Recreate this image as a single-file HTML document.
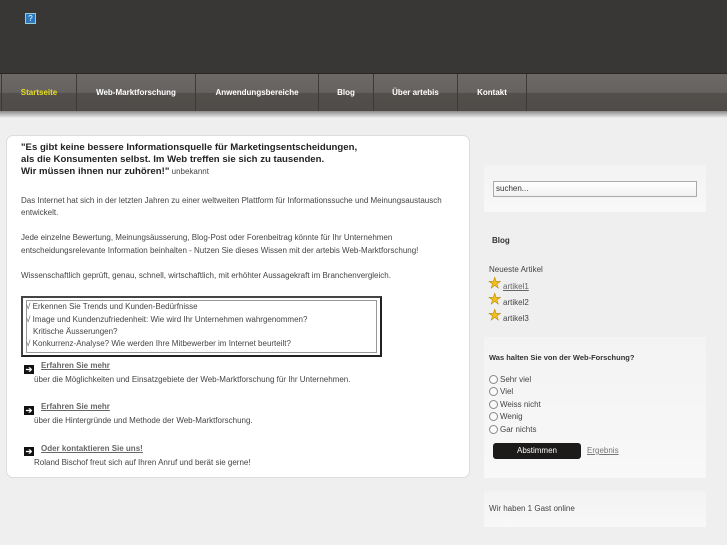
<!DOCTYPE html>
<html><head><meta charset="utf-8"><style>
*{margin:0;padding:0;box-sizing:border-box}
body{width:727px;height:545px;background:#efefef;font-family:"Liberation Sans",sans-serif;position:relative;overflow:hidden;color:#333}
.a{position:absolute;white-space:nowrap}
#hdr{position:absolute;left:0;top:0;width:727px;height:73px;background:#393735}
#nav{position:absolute;left:0;top:73px;width:727px;height:38px;background:linear-gradient(#6c6967 0,#666260 50%,#534f4c 52%,#4f4b48 100%);border-top:1px solid #2a2827}
#nav div{position:absolute;top:0;height:38px;border-left:1px solid #3c3937;color:#fff;font-size:8px;font-weight:bold;text-align:center;line-height:37px}
#sh{position:absolute;left:0;top:111px;width:727px;height:7px;background:linear-gradient(#8a8a8a,#efefef)}
#main{position:absolute;left:6px;top:135px;width:464px;height:343px;background:#fff;border:1px solid #ddd;border-radius:7px}
.q{font-size:9.6px;font-weight:bold;color:#222;left:21px}
.t{font-size:8px;color:#444}
.lk{font-size:8px;font-weight:bold;color:#666;text-decoration:underline}
.ar{position:absolute;width:10px;height:9px;background:#111;color:#fff;font-size:8px;line-height:9px;text-align:center;font-weight:bold}
.pn{position:absolute;left:484px;width:222px;background:linear-gradient(#f3f3f3,#f8f8f8)}
.rd{position:absolute;left:489px;width:9px;height:9px;border:1px solid #888;border-radius:50%;background:#fafafa}
.st{position:absolute;left:488px;font-size:15px;color:#f0c020;line-height:15px;-webkit-text-stroke:0.5px #b08000}
</style></head><body>
<div id="hdr"></div>
<div class="a" style="left:25px;top:13px;width:11px;height:11px;background:#2b78c0;border:1px solid #9cc;color:#fff;font-size:8px;line-height:9px;text-align:center">?</div>
<div id="nav">
<div style="left:1px;width:75px;color:#e8de20">Startseite</div>
<div style="left:76px;width:119px">Web-Marktforschung</div>
<div style="left:195px;width:123px">Anwendungsbereiche</div>
<div style="left:318px;width:55px">Blog</div>
<div style="left:373px;width:84px">Über artebis</div>
<div style="left:457px;width:69px">Kontakt</div>
<div style="left:526px;width:201px"></div>
</div>
<div id="sh"></div>
<div id="main"></div>
<div class="a q" style="top:142px">"Es gibt keine bessere Informationsquelle für Marketingsentscheidungen,</div>
<div class="a q" style="top:154px">als die Konsumenten selbst. Im Web treffen sie sich zu tausenden.</div>
<div class="a q" style="top:166px">Wir müssen ihnen nur zuhören!"<span style="font-size:8px;font-weight:normal;color:#444"> unbekannt</span></div>
<div class="a t" style="left:21px;top:196px">Das Internet hat sich in der letzten Jahren zu einer weltweiten Plattform für Informationssuche und Meinungsaustausch</div>
<div class="a t" style="left:21px;top:208px">entwickelt.</div>
<div class="a t" style="left:21px;top:233px">Jede einzelne Bewertung, Meinungsäusserung, Blog-Post oder Forenbeitrag könnte für Ihr Unternehmen</div>
<div class="a t" style="left:21px;top:246px">entscheidungsrelevante Information beinhalten - Nutzen Sie dieses Wissen mit der artebis Web-Marktforschung!</div>
<div class="a t" style="left:21px;top:271px">Wissenschaftlich geprüft, genau, schnell, wirtschaftlich, mit erhöhter Aussagekraft im Branchenvergleich.</div>
<div class="a" style="left:21px;top:296px;width:361px;height:61px;border:2px solid #444;border-right-color:#222;border-bottom-color:#222"><div style="position:absolute;left:3px;top:2px;right:3px;bottom:2px;border:1px solid #999"></div></div>
<div class="a t" style="left:26px;top:302px">√ Erkennen Sie Trends und Kunden-Bedürfnisse</div>
<div class="a t" style="left:26px;top:315px">√ Image und Kundenzufriedenheit: Wie wird Ihr Unternehmen wahrgenommen?</div>
<div class="a t" style="left:33px;top:327px">Kritische Äusserungen?</div>
<div class="a t" style="left:26px;top:339px">√ Konkurrenz-Analyse? Wie werden Ihre Mitbewerber im Internet beurteilt?</div>
<div class="ar" style="left:24px;top:365px">➔</div><div class="a lk" style="left:41px;top:361px">Erfahren Sie mehr</div>
<div class="a t" style="left:34px;top:375px">über die Möglichkeiten und Einsatzgebiete der Web-Marktforschung für Ihr Unternehmen.</div>
<div class="ar" style="left:24px;top:406px">➔</div><div class="a lk" style="left:41px;top:402px">Erfahren Sie mehr</div>
<div class="a t" style="left:34px;top:416px">über die Hintergründe und Methode der Web-Marktforschung.</div>
<div class="ar" style="left:24px;top:447px">➔</div><div class="a lk" style="left:41px;top:444px">Oder kontaktieren Sie uns!</div>
<div class="a t" style="left:34px;top:458px">Roland Bischof freut sich auf Ihren Anruf und berät sie gerne!</div>

<div class="pn" style="top:165px;height:47px"></div>
<div class="a" style="left:493px;top:181px;width:204px;height:16px;border:1px solid #aaa;background:linear-gradient(#fff,#f0f0f0);font-size:8px;color:#333;padding:2px 2px;line-height:10px">suchen...</div>
<div class="a" style="left:492px;top:236px;font-size:8px;font-weight:bold;color:#333">Blog</div>
<div class="a t" style="left:489px;top:265px">Neueste Artikel</div>
<div class="st" style="top:276px">★</div><div class="a t" style="left:503px;top:282px;text-decoration:underline;color:#666">artikel1</div>
<div class="st" style="top:292px">★</div><div class="a t" style="left:503px;top:298px">artikel2</div>
<div class="st" style="top:308px">★</div><div class="a t" style="left:503px;top:314px">artikel3</div>
<div class="pn" style="top:337px;height:141px"></div>
<div class="a" style="left:489px;top:353px;font-size:7.5px;font-weight:bold;color:#333">Was halten Sie von der Web-Forschung?</div>
<div class="rd" style="top:375px"></div><div class="a t" style="left:500px;top:375px">Sehr viel</div>
<div class="rd" style="top:387px"></div><div class="a t" style="left:500px;top:387px">Viel</div>
<div class="rd" style="top:400px"></div><div class="a t" style="left:500px;top:400px">Weiss nicht</div>
<div class="rd" style="top:412px"></div><div class="a t" style="left:500px;top:412px">Wenig</div>
<div class="rd" style="top:425px"></div><div class="a t" style="left:500px;top:425px">Gar nichts</div>
<div class="a" style="left:493px;top:443px;width:88px;height:16px;background:#1c1b1a;border-radius:3px;color:#fff;font-size:8px;text-align:center;line-height:16px">Abstimmen</div>
<div class="a t" style="left:587px;top:446px;text-decoration:underline;color:#777">Ergebnis</div>
<div class="pn" style="top:491px;height:36px"></div>
<div class="a t" style="left:489px;top:504px">Wir haben 1 Gast online</div>
</body></html>
